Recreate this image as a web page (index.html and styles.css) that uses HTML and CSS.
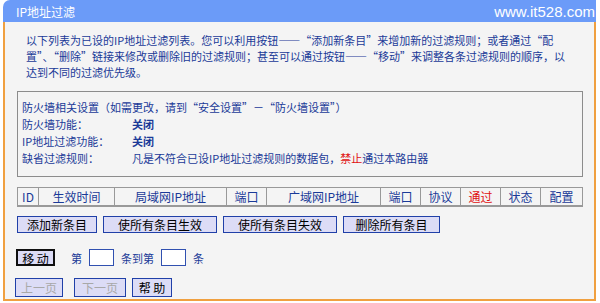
FILE: index.html
```html
<!DOCTYPE html>
<html lang="zh-CN">
    <head>
        <meta charset="utf-8">
        <link rel="stylesheet" href="styles.css">
    </head>
    <body>
        <div class="panel">
            <div class="title">
                <span>IP地址过滤</span>
                <span class="mark">www.it528.com</span>
            </div>
            <div class="content">
                <p class="intro">以下列表为已设的IP地址过滤列表。您可以利用按钮——“添加新条目”来增加新的过滤规则；或者通过“配<br>置”、“删除”链接来修改或删除旧的过滤规则；甚至可以通过按钮——“移动”来调整各条过滤规则的顺序，以<br>达到不同的过滤优先级。</p>
                <div class="box">
                    <div class="row">防火墙相关设置（如需更改，请到“安全设置”－“防火墙设置”）</div>
                    <div class="row"><span class="key">防火墙功能：</span><b>关闭</b></div>
                    <div class="row"><span class="key">IP地址过滤功能：</span><b>关闭</b></div>
                    <div class="row"><span class="key">缺省过滤规则：</span>凡是不符合已设IP地址过滤规则的数据包，<span class="red">禁止</span>通过本路由器</div>
                </div>
                <table class="list">
                    <tr>
                        <th class="c-id">ID</th>
                        <th class="c-time">生效时间</th>
                        <th class="c-ip">局域网IP地址</th>
                        <th class="c-port">端口</th>
                        <th class="c-wan">广域网IP地址</th>
                        <th class="c-port">端口</th>
                        <th class="c-port">协议</th>
                        <th class="c-port red">通过</th>
                        <th class="c-port">状态</th>
                        <th>配置</th>
                    </tr>
                </table>
                <div class="actions">
                    <button class="btn w80">添加新条目</button>
                    <button class="btn w114">使所有条目生效</button>
                    <button class="btn w114">使所有条目失效</button>
                    <button class="btn w97">删除所有条目</button>
                </div>
                <div class="move">
                    <button class="btn focus">移 动</button>
                    <span>第</span>
                    <input class="num" type="text">
                    <span>条到第</span>
                    <input class="num" type="text">
                    <span>条</span>
                </div>
                <div class="pager">
                    <button class="btn page" disabled>上一页</button>
                    <button class="btn page" disabled>下一页</button>
                    <button class="btn help">帮 助</button>
                </div>
            </div>
        </div>
    </body>
</html>
```

FILE: styles.css
```css
* {
    margin: 0;
    padding: 0;
    box-sizing: border-box;
}
:root {
    --text-color: #1a3a98;
    --line-color: #8c8c8c;
    --btn-bg: #dcdcf6;
    --btn-border: #2040a8;
}
body {
    font-family: "Noto Sans CJK SC", "Liberation Sans", sans-serif;
    font-size: 11px;
    color: var(--text-color);
    background: #fff;
}
.panel {
    margin-left: 3px;
    width: 593px;
}
.title {
    height: 22px;
    background: #6b9bf8;
    border-radius: 7px 0 0 0;
    color: #fff;
    font-size: 12px;
    display: flex;
    align-items: center;
    justify-content: space-between;
    padding-left: 13px;
    padding-right: 1px;
}
.mark {
    font-family: "Liberation Sans", sans-serif;
    font-size: 15px;
}
.content {
    height: 279px;
    background: #f4f4f4;
    border: 2px solid #f0a040;
    border-top: none;
    padding: 10px 11px 0 12px;
}
.intro {
    padding-left: 9px;
    line-height: 16px;
    white-space: nowrap;
}
.box {
    margin-top: 11px;
    border: 1px solid var(--line-color);
    padding: 7px 4px 9px;
}
.row {
    line-height: 17px;
    white-space: nowrap;
}
.key {
    display: inline-block;
    width: 110px;
}
.red {
    color: #e01010;
}
.list {
    margin-top: 10px;
    width: 100%;
    border-collapse: collapse;
    table-layout: fixed;
}
.list th {
    font-weight: normal;
    font-size: 12px;
    height: 18px;
    border: 1px solid #999;
    border-bottom-width: 2px;
    border-right: none;
    padding: 0;
    text-align: center;
}
.list th:last-child {
    border-right: 1px solid #999;
}
.c-id { width: 21px; }
.c-time { width: 76px; }
.c-ip { width: 112px; }
.c-port { width: 40px; }
.c-wan { width: 114px; }
.btn {
    font-family: inherit;
    font-size: 12px;
    color: #000;
    background: var(--btn-bg);
    border: 1px solid var(--btn-border);
    height: 17px;
    line-height: 15px;
    padding: 0;
}
.w80 { width: 80px; }
.w114 { width: 114px; }
.w97 { width: 97px; }
.actions {
    margin-top: 9px;
    display: flex;
    gap: 6px;
}
.move {
    margin-top: 16px;
    margin-left: -1px;
    display: flex;
    align-items: center;
    gap: 7px;
}
.move .focus {
    width: 39px;
    border: 2px solid #101010;
    margin-right: 9px;
}
.num {
    width: 25px;
    height: 17px;
    background: #fff;
    border: 1px solid #3050b0;
}
.pager {
    margin-top: 12px;
    margin-left: -2px;
    display: flex;
    gap: 9px;
}
.btn.page {
    width: 48px;
    height: 19px;
    color: #a8a8a8;
}
.btn.page + .btn.page {
    margin-left: 2px;
    width: 52px;
}
.btn.help {
    width: 40px;
    height: 19px;
    margin-left: -3px;
}
```
